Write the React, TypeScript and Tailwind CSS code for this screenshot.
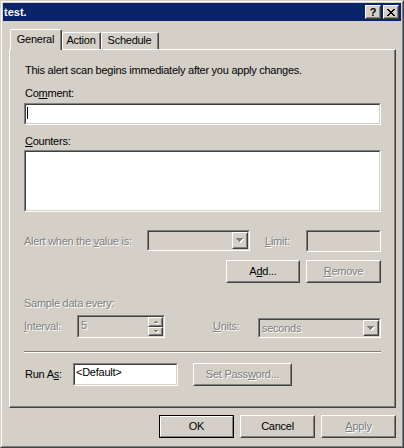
import React from 'react';

const dis = 'text-[#808080] [text-shadow:1px_1px_0_#fff]';

function Sunken({ className = '', inner = 'bg-white', children }: { className?: string; inner?: string; children?: React.ReactNode }) {
  return (
    <div className={`border border-t-[#808080] border-l-[#808080] border-r-white border-b-white ${className}`}>
      <div className={`h-full w-full border border-t-[#404040] border-l-[#404040] border-r-[#d4d0c8] border-b-[#d4d0c8] ${inner}`}>
        {children}
      </div>
    </div>
  );
}

function Raised({ className = '', children }: { className?: string; children?: React.ReactNode }) {
  return (
    <div className={`border border-t-white border-l-white border-r-[#404040] border-b-[#404040] ${className}`}>
      <div className="h-full w-full border border-t-[#d4d0c8] border-l-[#d4d0c8] border-r-[#808080] border-b-[#808080] bg-[#d4d0c8] flex items-center justify-center">
        {children}
      </div>
    </div>
  );
}

function DownArrow({ disabled = true }: { disabled?: boolean }) {
  return (
    <svg width="8" height="5" viewBox="0 0 8 5" shapeRendering="crispEdges">
      {disabled && <polygon points="1,1 8,1 4.5,5" fill="#fff" />}
      <polygon points="0,0 7,0 3.5,4" fill={disabled ? '#808080' : '#000'} />
    </svg>
  );
}

function SpinArrow({ up }: { up?: boolean }) {
  return (
    <svg width="6" height="4" viewBox="0 0 6 4" shapeRendering="crispEdges">
      {up ? (
        <>
          <polygon points="1,4 6,4 3.5,1.5" fill="#fff" />
          <polygon points="0,3 5,3 2.5,0.5" fill="#808080" />
        </>
      ) : (
        <>
          <polygon points="1,1 6,1 3.5,3.5" fill="#fff" />
          <polygon points="0,0 5,0 2.5,2.5" fill="#808080" />
        </>
      )}
    </svg>
  );
}

function Combo({ className = '', value = '' }: { className?: string; value?: string }) {
  return (
    <Sunken className={className} inner="bg-[#d4d0c8] flex items-stretch">
      <div className={`flex-1 flex items-center pl-[2px] ${dis}`}>{value}</div>
      <Raised className="w-[16px]">
        <DownArrow />
      </Raised>
    </Sunken>
  );
}

function Btn({ className = '', disabled = false, children }: { className?: string; disabled?: boolean; children?: React.ReactNode }) {
  return (
    <Raised className={`h-[23px] ${className}`}>
      <span className={disabled ? dis : 'text-black'}>{children}</span>
    </Raised>
  );
}

function CloseGlyph() {
  return (
    <svg width="8" height="7" viewBox="0 0 8 7" shapeRendering="crispEdges" fill="#000">
      <path d="M0 0h2v1H0zM6 0h2v1H6zM1 1h2v1H1zM5 1h2v1H5zM2 2h4v1H2zM3 3h2v1H3zM2 4h4v1H2zM1 5h2v1H1zM5 5h2v1H5zM0 6h2v1H0zM6 6h2v1H6z" />
    </svg>
  );
}

export default function App() {
  return (
    <div className="w-[404px] h-[448px] bg-[#d4d0c8] font-['Liberation_Sans',Arial,sans-serif] text-[11px] leading-[13px] tracking-[-0.25px] text-black select-none">
      <div className="h-full w-full border border-t-[#d4d0c8] border-l-[#d4d0c8] border-r-[#404040] border-b-[#404040]">
        <div className="h-full w-full border border-t-white border-l-white border-r-[#808080] border-b-[#808080] p-px flex flex-col">
          {/* title bar */}
          <div className="h-[18px] bg-[#0a246a] flex items-center pl-[1px] pr-[2px]">
            <span className="text-white font-bold tracking-normal">test.</span>
            <div className="ml-auto flex gap-[2px]">
              <Raised className="w-[16px] h-[14px]">
                <span className="font-bold text-[11px] leading-[10px] tracking-normal">?</span>
              </Raised>
              <Raised className="w-[16px] h-[14px]">
                <CloseGlyph />
              </Raised>
            </div>
          </div>

          {/* tabs */}
          <div className="ml-[6px] mt-[8px] flex flex-col w-[387px]">
            <div className="flex items-end h-[20px] ml-[1px]">
              <div className="relative z-10 -mb-px h-[21px] w-[52px] bg-[#d4d0c8] border-l border-t border-r border-l-white border-t-white border-r-[#404040] rounded-t-[2px]">
                <div className="h-full border-r border-r-[#808080] flex justify-center pt-[3px]">General</div>
              </div>
              <div className="h-[17px] w-[39px] border-l border-t border-r border-l-white border-t-white border-r-[#404040] rounded-t-[2px]">
                <div className="h-full border-r border-r-[#808080] flex justify-center pt-[1px]">Action</div>
              </div>
              <div className="h-[17px] w-[58px] border-l border-t border-r border-l-white border-t-white border-r-[#404040] rounded-t-[2px]">
                <div className="h-full border-r border-r-[#808080] flex justify-center pt-[1px]">Schedule</div>
              </div>
            </div>

            {/* panel */}
            <div className="h-[359px] border border-t-white border-l-white border-r-[#404040] border-b-[#404040]">
              <div className="h-full border-r border-b border-r-[#808080] border-b-[#808080] pl-[14px] pr-[13px] flex flex-col">
                <div className="mt-[14px] pl-[1px]">This alert scan begins immediately after you apply changes.</div>

                <div className="mt-[10px] pl-[1px]">
                  Co<u>m</u>ment:
                </div>
                <Sunken className="mt-[3px] h-[22px]">
                  <div className="w-px h-[12px] bg-black ml-[1px] mt-[2px]" />
                </Sunken>

                <div className="mt-[10px] pl-[1px]">
                  <u>C</u>ounters:
                </div>
                <Sunken className="mt-[2px] h-[62px]" />

                <div className="mt-[18px] h-[22px] flex items-center">
                  <div className={`w-[123px] ${dis}`}>
                    Alert when the <u>v</u>alue is:
                  </div>
                  <Combo className="w-[103px] h-[21px] self-start" />
                  <div className={`ml-[15px] w-[41px] ${dis}`}>
                    <u>L</u>imit:
                  </div>
                  <Sunken className="w-[75px] h-[22px]" inner="bg-[#d4d0c8]" />
                </div>

                <div className="mt-[8px] flex justify-end gap-[6px]">
                  <Btn className="w-[74px]">
                    A<u>d</u>d...
                  </Btn>
                  <Btn className="w-[75px]" disabled>
                    <u>R</u>emove
                  </Btn>
                </div>

                <div className={`mt-[14px] ${dis}`}>Sample data every:</div>

                <div className="mt-[5px] h-[23px] flex items-center">
                  <div className={`w-[53px] ${dis}`}>
                    <u>I</u>nterval:
                  </div>
                  <Sunken className="w-[88px] h-[23px]" inner="bg-[#d4d0c8] flex">
                    <div className={`flex-1 pl-[2px] pt-[2px] ${dis}`}>5</div>
                    <div className="w-[15px] flex flex-col">
                      <Raised className="h-[10px]">
                        <SpinArrow up />
                      </Raised>
                      <Raised className="h-[9px]">
                        <SpinArrow />
                      </Raised>
                    </div>
                  </Sunken>
                  <div className={`ml-[48px] w-[45px] ${dis}`}>
                    <u>U</u>nits:
                  </div>
                  <Combo className="w-[123px] h-[20px] self-end" value="seconds" />
                </div>

                <div className="mt-[13px] h-px bg-[#808080]" />
                <div className="h-px bg-white" />

                <div className="mt-[10px] h-[23px] flex items-center">
                  <div className="w-[49px] pl-[1px]">
                    Run A<u>s</u>:
                  </div>
                  <Sunken className="w-[105px] h-[23px]">
                    <div className="pl-[1px] pt-[1px]">&lt;Default&gt;</div>
                  </Sunken>
                  <Btn className="ml-[15px] w-[99px]" disabled>
                    Set Pass<u>w</u>ord...
                  </Btn>
                </div>
              </div>
            </div>
          </div>

          {/* dialog buttons */}
          <div className="mt-[7px] flex justify-end gap-[6px] pr-[5px]">
            <div className="w-[75px] h-[23px] border border-black">
              <div className="h-full w-full border border-t-white border-l-white border-r-[#808080] border-b-[#808080] flex items-center justify-center">
                OK
              </div>
            </div>
            <Btn className="w-[75px]">Cancel</Btn>
            <Btn className="w-[75px]" disabled>
              <u>A</u>pply
            </Btn>
          </div>
        </div>
      </div>
    </div>
  );
}
